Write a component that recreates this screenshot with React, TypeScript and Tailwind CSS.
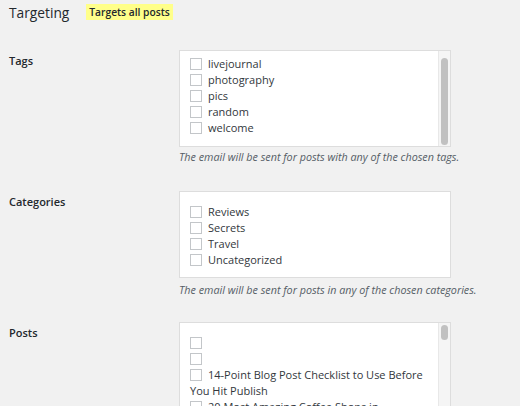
import React from "react";

const font = { fontFamily: '"Open Sans", "Noto Sans", sans-serif' };

function Box() {
  return (
    <span className="inline-block w-[12px] h-[12px] border border-[#c3c6c9] bg-white align-[-2px] mr-[6px]" />
  );
}

function Row({ label }: { label: string }) {
  return (
    <div className="leading-[16px]">
      <Box />
      {label}
    </div>
  );
}

function Scroll({ top, height }: { top: string; height: string }) {
  return (
    <div className="w-[12px] bg-[#f5f5f5] border-l border-[#e8e8e8] flex flex-col items-center">
      <div className={`${top} w-[7px] ${height} rounded-full bg-[#c1c1c1]`} />
    </div>
  );
}

export default function App() {
  return (
    <div
      className="w-[520px] h-[406px] bg-[#f1f1f1] overflow-hidden text-[#32373c]"
      style={font}
    >
      <div className="flex items-center pl-[9px] pt-[4px] h-[22px]">
        <h2 className="text-[13.75px] text-[#23282d] leading-[20px] font-normal">Targeting</h2>
        <span className="ml-[17px] bg-[#ffff8a] text-[#23282d] text-[10.25px] font-semibold px-[3px] leading-[16px] h-[16px] mt-[-2px]">
          Targets all posts
        </span>
      </div>

      {/* Tags */}
      <div className="flex mt-[28px]">
        <div className="w-[179px] pl-[9px] pt-[3px] text-[11px] font-semibold text-[#23282d] leading-[16px]">Tags</div>
        <div>
          <div className="w-[272px] h-[97px] bg-white border border-[#dddddd] flex">
            <div className="flex-1 pl-[10px] pt-[5px] text-[11px]">
              <Row label="livejournal" />
              <Row label="photography" />
              <Row label="pics" />
              <Row label="random" />
              <Row label="welcome" />
            </div>
            <Scroll top="mt-[7px]" height="h-[87px]" />
          </div>
          <div className="mt-[2px] text-[10.75px] italic text-[#555d66] leading-[16px] whitespace-nowrap">
            The email will be sent for posts with any of the chosen tags.
          </div>
        </div>
      </div>

      {/* Categories */}
      <div className="flex mt-[26px]">
        <div className="w-[179px] pl-[9px] pt-[3px] text-[11px] font-semibold text-[#23282d] leading-[16px]">Categories</div>
        <div>
          <div className="w-[272px] h-[87px] bg-white border border-[#dddddd] flex">
            <div className="flex-1 pl-[10px] pt-[12px] text-[11px]">
              <Row label="Reviews" />
              <Row label="Secrets" />
              <Row label="Travel" />
              <Row label="Uncategorized" />
            </div>
          </div>
          <div className="mt-[4px] text-[10.75px] italic text-[#555d66] leading-[16px] whitespace-nowrap">
            The email will be sent for posts in any of the chosen categories.
          </div>
        </div>
      </div>

      {/* Posts */}
      <div className="flex mt-[24px]">
        <div className="w-[179px] pl-[9px] pt-[3px] text-[11px] font-semibold text-[#23282d] leading-[16px]">Posts</div>
        <div>
          <div className="w-[272px] h-[120px] bg-white border border-[#dddddd] flex">
            <div className="flex-1 pl-[10px] pr-[10px] pt-[12px] text-[11px]">
              <Row label="" />
              <Row label="" />
              <Row label="14-Point Blog Post Checklist to Use Before You Hit Publish" />
              <Row label="20 Most Amazing Coffee Shops in Washington" />
            </div>
            <Scroll top="mt-[2px]" height="h-[15px]" />
          </div>
        </div>
      </div>
    </div>
  );
}
